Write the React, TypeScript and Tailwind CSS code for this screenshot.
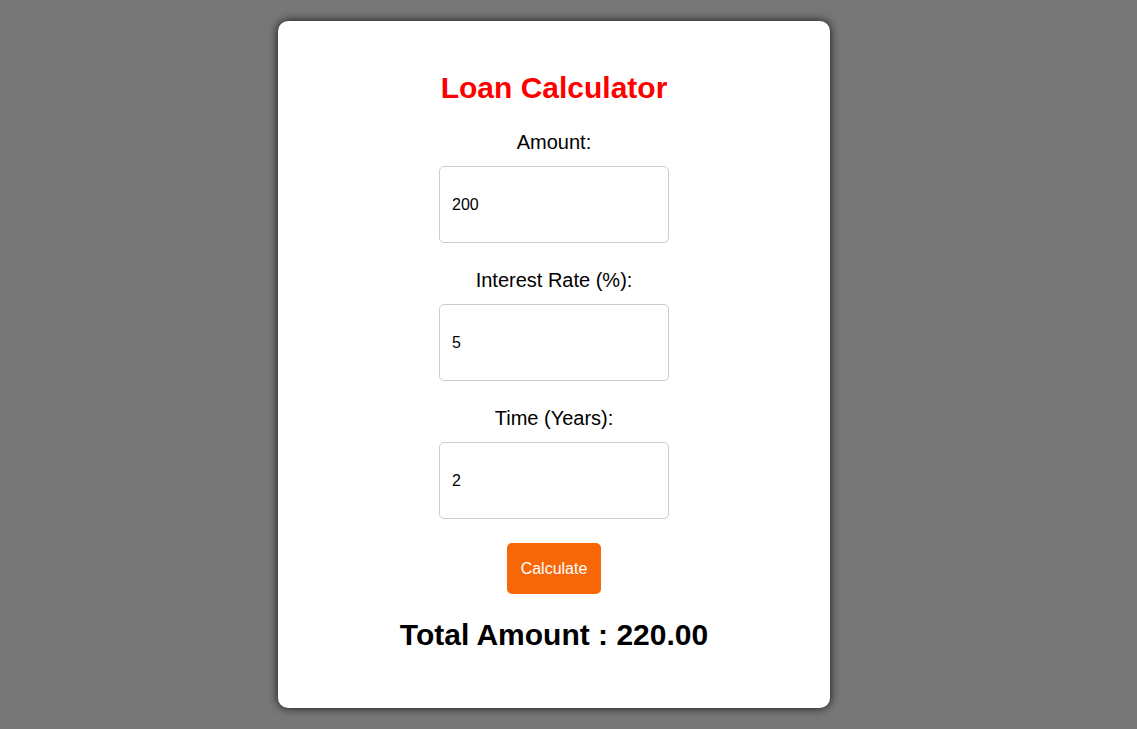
const Field = ({ label, value }: { label: string; value: string }) => (
	<div className="flex flex-col items-center mt-[25px]">
		<label className="text-[20px] leading-[24px] text-black">{label}</label>
		<input
			type="text"
			defaultValue={value}
			className="mt-[12px] w-[230px] h-[77px] px-[12px] text-[16px] text-black border border-[#cccccc] rounded-[5px] outline-none bg-white"
		/>
	</div>
);

const App = () => {
	return (
		<div className="min-h-[729px] w-full bg-[#777777] pl-[278px] pt-[21px] font-['Liberation_Sans',Arial,sans-serif]">
			<div className="w-[552px] bg-white rounded-[10px] shadow-[0_0_10px_rgba(0,0,0,0.85)] pt-[50px] pb-[56px] flex flex-col items-center">
				<h1 className="text-[30px] leading-[34px] font-bold text-[#ff0000]">Loan Calculator</h1>
				<Field label="Amount:" value="200" />
				<Field label="Interest Rate (%):" value="5" />
				<Field label="Time (Years):" value="2" />
				<button className="mt-[24px] w-[94px] h-[51px] rounded-[5px] bg-[#f76707] text-white text-[16px]">
					Calculate
				</button>
				<h2 className="mt-[24px] text-[30px] leading-[34px] font-bold text-black">Total Amount : 220.00</h2>
			</div>
		</div>
	);
};

export default App;
